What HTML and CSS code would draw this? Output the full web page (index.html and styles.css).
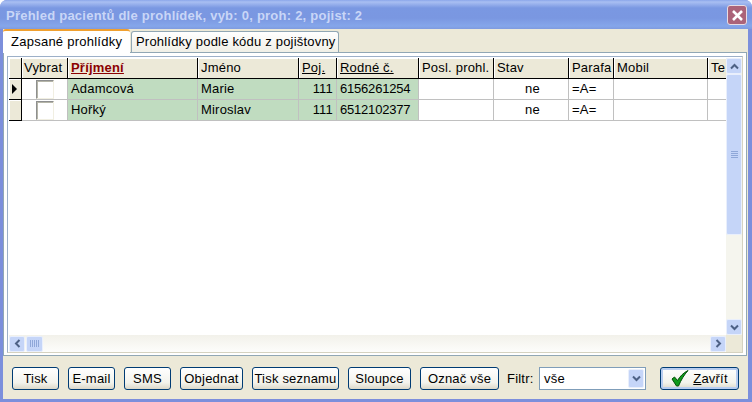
FILE: index.html
```html
<!DOCTYPE html>
<html lang="cs">
<head>
<meta charset="utf-8">
<title>Přehled pacientů</title>
<link rel="stylesheet" href="styles.css">
</head>
<body>
<div class="window">
  <header class="titlebar">
    <span class="title">Přehled pacientů dle prohlídek, vyb: 0, proh: 2, pojist: 2</span>
    <span class="close"><svg width="13" height="13" viewBox="0 0 13 13"><path d="M2 2l9 9M11 2l-9 9" stroke="#fff" stroke-width="2.6" fill="none"/></svg></span>
  </header>
  <div class="client">
    <div class="tabs">
      <div class="tab active">Zapsané prohlídky</div>
      <div class="tab">Prohlídky podle kódu z pojištovny</div>
    </div>
    <div class="panel">
      <div class="gridbox">
        <div class="gridmain">
          <div class="cols">
            <div class="row head">
              <div class="c c0"></div><div class="c c1">Vybrat</div><div class="c c2 sorted">Příjmení</div><div class="c c3">Jméno</div><div class="c c4 link">Poj.</div><div class="c c5 link">Rodné č.</div><div class="c c6">Posl. prohl.</div><div class="c c7">Stav</div><div class="c c8">Parafa</div><div class="c c9">Mobil</div><div class="c c10">Te</div>
            </div>
            <div class="row">
              <div class="c c0"><span class="arrow"></span></div><div class="c c1"><span class="check"></span></div><div class="c c2 g">Adamcová</div><div class="c c3 g">Marie</div><div class="c c4 g num">111</div><div class="c c5 g digits">6156261254</div><div class="c c6"></div><div class="c c7 mid">ne</div><div class="c c8">=A=</div><div class="c c9"></div><div class="c c10"></div>
            </div>
            <div class="row">
              <div class="c c0"></div><div class="c c1"><span class="check"></span></div><div class="c c2 g">Hořký</div><div class="c c3 g">Miroslav</div><div class="c c4 g num">111</div><div class="c c5 g digits">6512102377</div><div class="c c6"></div><div class="c c7 mid">ne</div><div class="c c8">=A=</div><div class="c c9"></div><div class="c c10"></div>
            </div>
          </div>
          <div class="hscroll">
            <span class="sbtn"><svg width="7" height="9" viewBox="0 0 7 9"><path d="M5.5 1L2 4.5 5.5 8" stroke="#4d6185" stroke-width="2" fill="none"/></svg></span>
            <span class="hthumb"><i></i><i></i><i></i><i></i><i></i></span>
            <span class="sfill"></span>
            <span class="sbtn"><svg width="7" height="9" viewBox="0 0 7 9"><path d="M1.5 1L5 4.5 1.5 8" stroke="#4d6185" stroke-width="2" fill="none"/></svg></span>
          </div>
        </div>
        <div class="vscroll">
          <span class="sbtn v"><svg width="9" height="7" viewBox="0 0 9 7"><path d="M1 5.5L4.5 2 8 5.5" stroke="#4d6185" stroke-width="2" fill="none"/></svg></span>
          <span class="vthumb"><i></i><i></i><i></i><i></i></span>
          <span class="sfill"></span>
          <span class="sbtn v"><svg width="9" height="7" viewBox="0 0 9 7"><path d="M1 1.5L4.5 5 8 1.5" stroke="#4d6185" stroke-width="2" fill="none"/></svg></span>
          <span class="corner"></span>
        </div>
      </div>
    </div>
    <div class="toolbar">
      <button class="btn w47">Tisk</button>
      <button class="btn w47">E-mail</button>
      <button class="btn w47">SMS</button>
      <button class="btn w63">Objednat</button>
      <button class="btn w87">Tisk seznamu</button>
      <button class="btn w63">Sloupce</button>
      <button class="btn w79">Označ vše</button>
      <label class="flabel">Filtr:</label>
      <div class="combo"><span class="cval">vše</span><span class="cbtn"><svg width="9" height="7" viewBox="0 0 9 7"><path d="M1 1.5L4.5 5 8 1.5" stroke="#4d6185" stroke-width="2" fill="none"/></svg></span></div>
      <button class="btn close-btn"><svg width="18" height="17" viewBox="0 0 18 17"><path d="M1 9L3.5 7 6.5 10.5C9 6.5 12 3 17 .5 13 5 10 10 7.5 16H5.5Z" fill="#0f9a1a" stroke="#04500a" stroke-width="1"/></svg><span><u>Z</u>avřít</span></button>
    </div>
  </div>
</div>
</body>
</html>
```
FILE: styles.css
```css
* { box-sizing: border-box; }
html, body { margin: 0; padding: 0; }
body { width: 752px; height: 402px; overflow: hidden; background: #fff; font-family: "Liberation Sans", Arial, sans-serif; font-size: 13px; letter-spacing: 0.2px; color: #000; }
.window { width: 752px; height: 402px; display: flex; flex-direction: column; background: #7c8fdc; border-radius: 7px 7px 0 0; }
.titlebar { height: 29px; flex: none; display: flex; align-items: center; justify-content: space-between; padding: 1px 5px 0 6px; border-radius: 7px 7px 0 0; background: linear-gradient(#8ba6ea 0, #a9bff2 2px, #7a98e2 8px, #7a97e1 18px, #85a6ea 26px, #7f9bdf 29px); }
.title { font-weight: bold; font-size: 13px; letter-spacing: 0.24px; color: #c9d6f7; white-space: nowrap; }
.close { width: 20px; height: 20px; display: flex; align-items: center; justify-content: center; border: 1px solid #e8dde4; border-radius: 3px; background: #ab6379; }
.client { flex: 1; margin: 0 4px 3px 3px; background: #ece9d8; display: flex; flex-direction: column; min-height: 0; }
.tabs { display: flex; align-items: flex-end; height: 23px; flex: none; }
.tab { height: 21px; padding: 0 4px; line-height: 20px; background: linear-gradient(#fff, #f0efe6); border: 1px solid #91a7b4; border-bottom: 0; border-radius: 3px 3px 0 0; white-space: nowrap; width: 208px; margin-left: 1px; }
.tab.active { height: 24px; width: 127px; margin-left: 0; padding: 1px 0 0 8px; background: #fff; border: 0; border-top: 2px solid #f0a030; position: relative; z-index: 1; margin-bottom: -1px; border-radius: 3px 3px 0 0; letter-spacing: 0.25px; }
.panel { height: 304px; flex: none; background: #fff; border: 1px solid #91a7b4; padding: 3px 3px 2px 3px; width: 744px; }
.gridbox { height: 100%; display: flex; padding: 1px 0 0 1px; border: 1px solid #d5d2c0; border-top-color: #9db0c8; border-left-color: #9db0c8; background: #fff; }
.gridmain { flex: 1; min-width: 0; display: flex; flex-direction: column; }
.cols { flex: 1; min-height: 0; overflow: hidden; }
.row { display: flex; height: 21px; }
.c { flex: none; height: 100%; padding-left: 3px; line-height: 20px; border-right: 1px solid #c0c0c0; border-bottom: 1px solid #c0c0c0; white-space: nowrap; overflow: hidden; background: #fff; }
.head .c { background: #ece9d8; border-right: 1px solid #000; border-bottom: 1px solid #000; box-shadow: inset 1px 1px 0 #fff; line-height: 19px; }
.c0 { width: 13px; background: #ece9d8; border-right: 1px solid #000; border-bottom: 1px solid #000; padding-left: 3px; display: flex; align-items: center; box-shadow: inset 1px 1px 0 #fff; }
.c1 { width: 46px; display: flex; justify-content: center; align-items: center; padding-left: 0; }
.head .c1 { padding-left: 2px; display: block; }
.c2 { width: 130px; }
.c3 { width: 101px; }
.c4 { width: 38px; }
.c5 { width: 82px; }
.c6 { width: 75px; }
.c7 { width: 75px; }
.c8 { width: 45px; }
.c9 { width: 94px; }
.c10 { width: 19px; border-right: 0; }
.head .c10 { border-right: 0; }
.g { background: #c0dcc0; }
.num { text-align: right; padding-right: 3px; }
.digits { letter-spacing: -0.2px; }
.mid { text-align: center; }
.sorted { font-weight: bold; color: #8b0000; text-decoration: underline; }
.link { text-decoration: underline; }
.arrow { width: 0; height: 0; border-left: 5px solid #000; border-top: 5px solid transparent; border-bottom: 5px solid transparent; }
.check { width: 18px; height: 19px; border: 1px solid; border-color: #8e8f8f #f1efe2 #f1efe2 #8e8f8f; box-shadow: inset 1px 1px 0 #b5b5a8; background: #fff; }
.hscroll { height: 17px; flex: none; display: flex; align-items: center; gap: 1px; background: linear-gradient(#f2f1ea, #fdfdfb); }
.sbtn { width: 16px; height: 16px; flex: none; display: flex; align-items: center; justify-content: center; background: #c5d5f8; border: 1px solid #e9effc; border-radius: 2px; }
.sfill { flex: 1; }
.hthumb { width: 17px; height: 16px; display: flex; align-items: center; justify-content: center; gap: 1px; background: #c5d5f8; border: 1px solid #e9effc; border-radius: 2px; }
.hthumb i { width: 1px; height: 7px; background: #8fa7d8; }
.vscroll { width: 16px; flex: none; display: flex; flex-direction: column; background: #f5f5ee; }
.sbtn.v { width: 16px; height: 16px; }
.vthumb { height: 161px; flex: none; display: flex; flex-direction: column; align-items: center; justify-content: center; gap: 1px; background: #c5d5f8; border: 1px solid #e9effc; border-radius: 2px; }
.vthumb i { width: 7px; height: 1px; background: #8fa7d8; }
.corner { height: 17px; flex: none; background: #ece9d8; }
.toolbar { flex: 1; display: flex; align-items: center; padding: 2px 0 0 9px; gap: 9px; }
.btn { height: 23px; padding: 0; font: inherit; letter-spacing: 0.2px; color: #000; background: linear-gradient(#fff, #f3f3ec 70%, #dcd8c8); border: 1px solid #003c74; border-radius: 3px; white-space: nowrap; }
.w47 { width: 47px; }
.w63 { width: 63px; }
.w87 { width: 87px; }
.w79 { width: 79px; }
.flabel { margin-left: -1px; width: 24px; white-space: nowrap; }
.combo { width: 107px; height: 23px; margin-left: -1px; display: flex; align-items: center; justify-content: space-between; background: #fff; border: 1px solid #7f9db9; padding: 1px; }
.cval { padding-left: 3px; }
.cbtn { width: 16px; height: 19px; display: flex; align-items: center; justify-content: center; background: #c5d5f8; border: 1px solid #e9effc; border-radius: 2px; }
.close-btn { width: 79px; margin-left: 5px; display: flex; align-items: center; justify-content: center; gap: 4px; box-shadow: inset 0 0 0 2px #b8cdf0; }
```
